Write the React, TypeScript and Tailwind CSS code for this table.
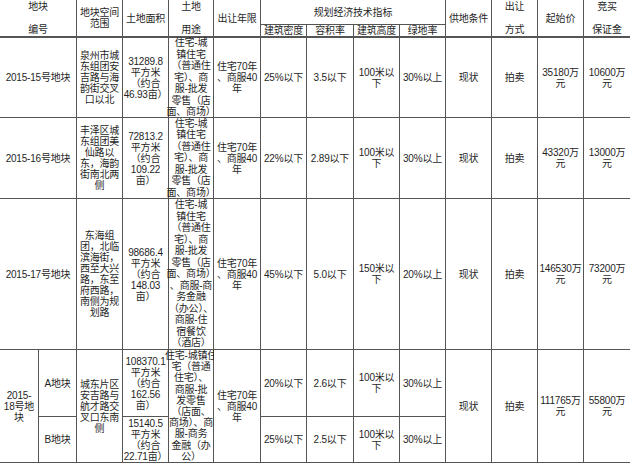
import type { ReactNode } from 'react'

function Cell({
  lines,
  className = '',
}: {
  lines: ReactNode[]
  className?: string
}) {
  return (
    <div
      className={`bg-white flex flex-col items-center justify-center text-center whitespace-nowrap ${className}`}
    >
      {lines.map((l, i) => (
        <span key={i}>{l}</span>
      ))}
    </div>
  )
}

// two-line header labels sit at the top and bottom of the cell
function SplitHead({ top, bottom, className = '' }: { top: string; bottom: string; className?: string }) {
  return (
    <div
      className={`bg-white flex flex-col items-center justify-between text-center whitespace-nowrap py-px border-b border-[#555] ${className}`}
    >
      <span>{top}</span>
      <span>{bottom}</span>
    </div>
  )
}

const useLines = ['住宅-城', '镇住宅', '（普通住', '宅）、商', '服-批发', '零售（店', '面、商场）']

const rows = [
  {
    id: '2015-15号地块',
    range: ['泉州市城', '东组团安', '吉路与海', '韵街交叉', '口以北'],
    area: ['31289.8', '平方米', '（约合', '46.93亩）'],
    use: useLines,
    density: '25%以下',
    far: '3.5以下',
    height: '100米以',
    green: '30%以上',
    price: '35180万',
    deposit: '10600万',
  },
  {
    id: '2015-16号地块',
    range: ['丰泽区城', '东组团美', '仙路以', '东，海韵', '街南北两', '侧'],
    area: ['72813.2', '平方米', '（约合', '109.22', '亩）'],
    use: useLines,
    density: '22%以下',
    far: '2.89以下',
    height: '100米以',
    green: '30%以上',
    price: '43320万',
    deposit: '13000万',
  },
  {
    id: '2015-17号地块',
    range: ['东海组', '团，北临', '滨海街，', '西至大兴', '路，东至', '府西路，', '南侧为规', '划路'],
    area: ['98686.4', '平方米', '（约合', '148.03', '亩）'],
    use: [...useLines, '、商服-商', '务金融', '（办公）、', '商服-住', '宿餐饮', '（酒店）'],
    density: '45%以下',
    far: '5.0以下',
    height: '150米以',
    green: '20%以上',
    price: '146530万',
    deposit: '73200万',
  },
]

export default function App() {
  return (
    <div className="w-[630px] h-[463px] bg-white overflow-hidden font-['Liberation_Sans','Noto_Sans_CJK_SC',sans-serif] text-[10px] leading-[11px] text-[#1f1f1f] tracking-[-0.2px]">
      <div className="grid grid-cols-[38px_37px_45px_45px_44px_46px_45px_46px_45px_45px_45px_45px_45px_46px] grid-rows-[24px_12px_79px_80px_150px_66px_45px] gap-px bg-[#555] pb-px">
        {/* Header */}
        <SplitHead top="地块" bottom="编号" className="col-span-2 row-span-2" />
        <Cell lines={['地块空间', '范围']} className="row-span-2 border-b border-[#555]" />
        <Cell lines={['土地面积']} className="row-span-2 border-b border-[#555]" />
        <SplitHead top="土地" bottom="用途" className="row-span-2" />
        <Cell lines={['出让年限']} className="row-span-2 border-b border-[#555]" />
        <Cell lines={['规划经济技术指标']} className="col-span-4" />
        <Cell lines={['供地条件']} className="row-span-2 border-b border-[#555]" />
        <SplitHead top="出让" bottom="方式" className="row-span-2" />
        <Cell lines={['起始价']} className="row-span-2 border-b border-[#555]" />
        <SplitHead top="竞买" bottom="保证金" className="row-span-2" />
        <Cell lines={['建筑密度']} className="border-b border-[#555]" />
        <Cell lines={['容积率']} className="border-b border-[#555]" />
        <Cell lines={['建筑高度']} className="border-b border-[#555]" />
        <Cell lines={['绿地率']} className="border-b border-[#555]" />

        {/* 15 - 17 */}
        {rows.map((r) => (
          <div key={r.id} className="contents">
            <Cell lines={[r.id]} className="col-span-2" />
            <Cell lines={r.range} />
            <Cell lines={r.area} />
            <Cell lines={r.use} className="leading-[11.5px]" />
            <Cell lines={['住宅70年', '、商服40', '年']} />
            <Cell lines={[r.density]} />
            <Cell lines={[r.far]} />
            <Cell lines={[r.height, '下']} />
            <Cell lines={[r.green]} />
            <Cell lines={['现状']} />
            <Cell lines={['拍卖']} />
            <Cell lines={[r.price, '元']} />
            <Cell lines={[r.deposit, '元']} />
          </div>
        ))}

        {/* 18 A / B */}
        <Cell lines={['2015-', '18号地', '块']} className="row-span-2" />
        <Cell lines={['A地块']} />
        <Cell lines={['城东片区', '安吉路与', '航才路交', '叉口东南', '侧']} className="row-span-2" />
        <Cell lines={['108370.1', '平方米', '（约合', '162.56', '亩）']} />
        <Cell
          lines={['住宅-城镇住', '宅（普通', '住宅）、', '商服-批', '发零售', '（店面、', '商场）、商', '服-商务', '金融（办', '公）']}
          className="row-span-2 leading-[11.2px]"
        />
        <Cell lines={['住宅70年', '、商服40', '年']} className="row-span-2" />
        <Cell lines={['20%以下']} />
        <Cell lines={['2.6以下']} />
        <Cell lines={['100米以', '下']} />
        <Cell lines={['30%以上']} />
        <Cell lines={['现状']} className="row-span-2" />
        <Cell lines={['拍卖']} className="row-span-2" />
        <Cell lines={['111765万', '元']} className="row-span-2" />
        <Cell lines={['55800万', '元']} className="row-span-2" />

        <Cell lines={['B地块']} />
        <Cell lines={['15140.5', '平方米', '（约合', '22.71亩）']} />
        <Cell lines={['25%以下']} />
        <Cell lines={['2.5以下']} />
        <Cell lines={['100米以', '下']} />
        <Cell lines={['30%以上']} />
      </div>
    </div>
  )
}
